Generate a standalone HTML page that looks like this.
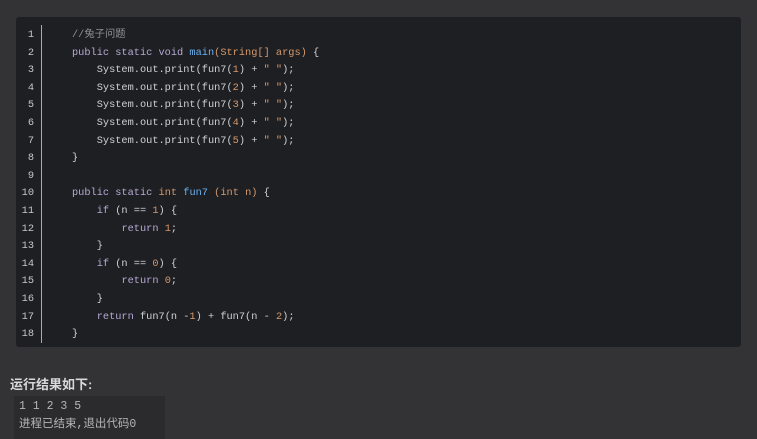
<!DOCTYPE html>
<html><head><meta charset="utf-8"><style>
body{margin:0;width:757px;height:439px;background:#333335;overflow:hidden;font-family:"Liberation Mono","Noto Sans CJK SC",monospace;}
.code{position:absolute;left:16px;top:17px;width:725px;height:330px;background:#1e1f22;border-radius:3px;}
.ln{position:absolute;left:0;top:10px;width:18px;text-align:right;color:#c8c8c8;font-size:10.3px;line-height:17.6px;}
.sep{position:absolute;left:25px;top:8px;width:1px;height:318px;background:#aaa;}
pre{position:absolute;left:56px;top:10px;margin:0;font-family:inherit;font-size:10.3px;line-height:17.6px;color:#cfd2d6;}
.k{color:#b7a9d6}.f{color:#6cb0f0}.o{color:#d7996b}.c{color:#8e9198}
h4{position:absolute;left:10px;top:374px;margin:0;font-family:"Liberation Sans","Noto Sans CJK SC",sans-serif;font-size:13px;color:#d8d8d8;font-weight:bold;}
.out{position:absolute;left:14px;top:396px;width:151px;height:43px;background:#2b2b2d;color:#b5b5b5;font-size:11.5px;line-height:18px;padding:2px 0 0 5px;box-sizing:border-box;white-space:pre;}
</style></head><body>
<div class="code"><div class="ln">1<br>2<br>3<br>4<br>5<br>6<br>7<br>8<br>9<br>10<br>11<br>12<br>13<br>14<br>15<br>16<br>17<br>18</div><div class="sep"></div>
<pre><span class="c">//兔子问题</span>
<span class="k">public static void</span> <span class="f">main</span><span class="o">(String[] args)</span> {
    System.out.print(fun7(<span class="o">1</span>) + <span class="o">" "</span>);
    System.out.print(fun7(<span class="o">2</span>) + <span class="o">" "</span>);
    System.out.print(fun7(<span class="o">3</span>) + <span class="o">" "</span>);
    System.out.print(fun7(<span class="o">4</span>) + <span class="o">" "</span>);
    System.out.print(fun7(<span class="o">5</span>) + <span class="o">" "</span>);
}

<span class="k">public static</span> <span class="o">int</span> <span class="f">fun7</span> <span class="o">(int n)</span> {
    <span class="k">if</span> (n == <span class="o">1</span>) {
        <span class="k">return</span> <span class="o">1</span>;
    }
    <span class="k">if</span> (n == <span class="o">0</span>) {
        <span class="k">return</span> <span class="o">0</span>;
    }
    <span class="k">return</span> fun7(n -<span class="o">1</span>) + fun7(n - <span class="o">2</span>);
}</pre></div>
<h4>运行结果如下:</h4>
<div class="out">1 1 2 3 5
进程已结束,退出代码0</div>
</body></html>
